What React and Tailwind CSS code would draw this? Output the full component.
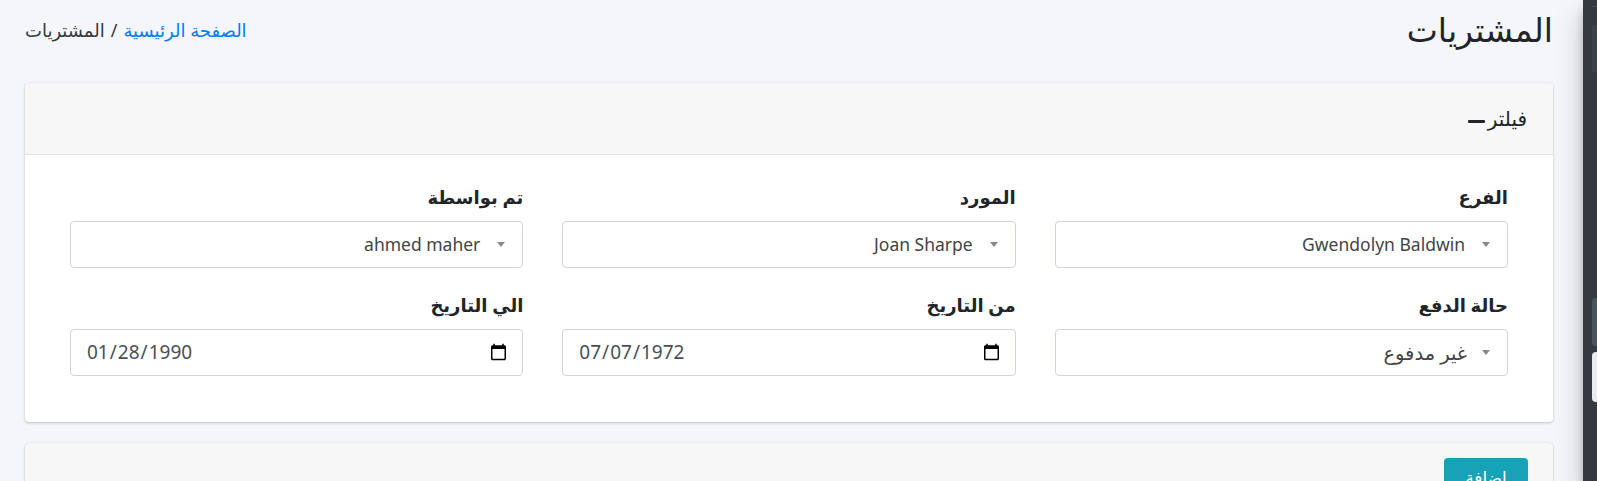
import React from "react";

const selects = [
  { label: "الفرع", value: "Gwendolyn Baldwin" },
  { label: "المورد", value: "Joan Sharpe" },
  { label: "تم بواسطة", value: "ahmed maher" },
];

function SelectBox({ value, arabic }) {
  return (
    <div className="flex h-[47px] items-center rounded-[4px] border border-[#ced4da] bg-white pr-[17px]">
      <span className="h-0 w-0 border-x-[4px] border-t-[5px] border-x-transparent border-t-[#888]" />
      <span
        className={
          arabic
            ? "mr-[15px] text-[19.5px] leading-none text-[#444]"
            : "mr-[17px] text-[17.5px] leading-none text-[#444]"
        }
      >
        {value}
      </span>
    </div>
  );
}

function DateBox({ value }) {
  return (
    <input
      type="date"
      dir="ltr"
      defaultValue={value}
      className="block h-[47px] w-full rounded-[4px] border border-[#ced4da] bg-white pl-[15px] pr-[12px] text-[19px] text-[#495057] outline-none"
    />
  );
}

function Field({ label, children }) {
  return (
    <div>
      <label className="mb-[12px] block text-[18px] font-bold leading-[24px] text-[#212529]">
        {label}
      </label>
      {children}
    </div>
  );
}

export default function App() {
  return (
    <div
      dir="rtl"
      className="flex h-[481px] overflow-hidden bg-[#f4f6f9] font-['Noto_Sans','DejaVu_Sans',sans-serif] text-[#212529]"
    >
      {/* sidebar (cut off on the right) */}
      <aside
        dir="ltr"
        className="z-10 w-[14px] shrink-0 bg-[#343a40] pl-[9px] shadow-[0_14px_28px_rgba(0,0,0,0.25),0_10px_10px_rgba(0,0,0,0.22)]"
      >
        <div className="mt-[6px] h-px bg-[#4b545c]" />
        <div className="mt-[18px] h-[47px] bg-[#3b4248]" />
        <div className="mt-[226px] h-[48px] rounded-l-[4px] bg-[#4b545c]" />
        <div className="mt-[6px] h-[50px] rounded-l-[4px] bg-[#e9ecef]" />
      </aside>

      <main className="min-w-0 flex-1 pl-[25px] pr-[30px]">
        {/* content header */}
        <div className="flex h-[83px] items-start justify-between pt-[10px]">
          <h1 className="text-[33px] font-normal leading-[1.2]">المشتريات</h1>
          <nav className="pt-[8px] text-[18px] leading-[24px]">
            <a href="#" className="text-[#007bff]">الصفحة الرئيسية</a>
            <span className="px-[6px] text-[#343a40]">/</span>
            <span className="text-[#343a40]">المشتريات</span>
          </nav>
        </div>

        {/* filter card */}
        <div className="rounded-[4px] bg-white shadow-[0_0_1px_rgba(0,0,0,0.125),0_1px_3px_rgba(0,0,0,0.2)]">
          <div className="flex h-[72px] items-center rounded-t-[4px] border-b border-[#e0e0e0] bg-[#f7f7f7] pr-[26px]">
            <span className="text-[20px] leading-none">فيلتر</span>
            <span className="mr-[3px] mt-[6px] h-[3px] w-[17px] rounded-[1px] bg-[#212529]" />
          </div>
          <div className="grid grid-cols-3 gap-x-[39px] gap-y-[25px] px-[45px] pb-[46px] pt-[30px]">
            {selects.map((s) => (
              <Field key={s.label} label={s.label}>
                <SelectBox value={s.value} />
              </Field>
            ))}
            <Field label="حالة الدفع">
              <SelectBox value="غير مدفوع" arabic />
            </Field>
            <Field label="من التاريخ">
              <DateBox value="1972-07-07" />
            </Field>
            <Field label="الي التاريخ">
              <DateBox value="1990-01-28" />
            </Field>
          </div>
        </div>

        {/* table card (cut off) */}
        <div className="mt-[21px] h-[80px] rounded-[4px] bg-[#f7f7f7] pr-[25px] pt-[15px] shadow-[0_0_1px_rgba(0,0,0,0.125),0_1px_3px_rgba(0,0,0,0.2)]">
          <button className="h-[40px] w-[84px] rounded-[4px] bg-[#17a2b8] text-[17px] text-white">
            اضافة
          </button>
        </div>
      </main>
    </div>
  );
}
